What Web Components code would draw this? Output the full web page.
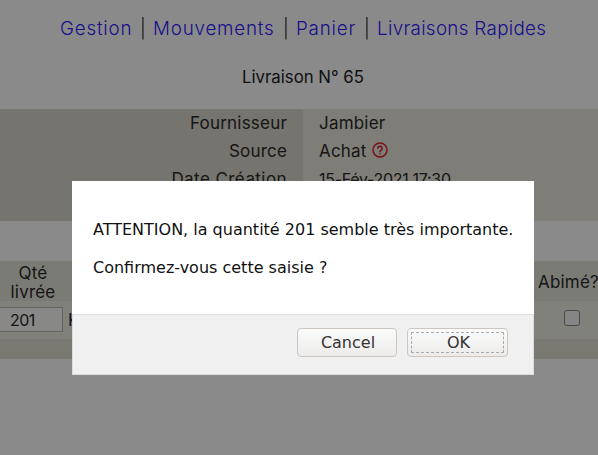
<!DOCTYPE html>
<html lang="fr"><head><meta charset="utf-8"><title>Livraison</title>
<style>
html,body{margin:0;padding:0;height:100%;background:#fff;overflow:hidden}
body{font-family:Inter,"Liberation Sans",sans-serif;color:#333}
</style></head><body>
<app-nav></app-nav>
<page-title>Livraison N° 65</page-title>
<info-table></info-table>
<lines-table></lines-table>
<confirm-dialog>
  <p>ATTENTION, la quantité 201 semble très importante.</p>
  <p>Confirmez-vous cette saisie ?</p>
</confirm-dialog>
<script>
function def(name, html){
  customElements.define(name, class extends HTMLElement{
    constructor(){super();this.attachShadow({mode:'open'}).innerHTML=html;}
  });
}
def('app-nav',`<style>
:host{display:flex;justify-content:center;height:59px;box-sizing:border-box;padding-left:8px;font:350 18.8px/58px Inter,sans-serif;color:#1a1a1a;letter-spacing:.8px}
a{color:#3020ff;text-decoration:none;white-space:nowrap}
a.g{width:71px}a.m{width:121px}a.p{width:59px}
a.long{width:169px;letter-spacing:.33px}
span{width:13px;padding-left:9px;letter-spacing:0;will-change:transform}
</style><a class="g">Gestion</a><span>|</span><a class="m">Mouvements</a><span>|</span><a class="p">Panier</a><span>|</span><a class="long">Livraisons Rapides</a>`);
def('page-title',`<style>
:host{display:block;height:50px;box-sizing:border-box;padding-left:8px;text-align:center;font:16.8px/36px Inter,sans-serif;color:#222}
</style><slot></slot>`);
def('info-table',`<style>
:host{display:grid;grid-template-columns:303px 1fr;grid-auto-rows:28px;font:17px/28px Inter,sans-serif;letter-spacing:.2px;color:#2a2a2a}
.k{background:#d8d6cb;text-align:right;padding-right:16px}
.v{background:#e9e8dc;padding-left:16px;display:flex;align-items:center;gap:5px}
.date{font-size:16px;letter-spacing:-.3px}
.wide{letter-spacing:.43px}
svg{width:16px;height:16px;margin-top:-2px}
</style>
<div class="k">Fournisseur</div><div class="v">Jambier</div>
<div class="k">Source</div><div class="v">Achat <svg viewBox="0 0 16 16" fill="none" stroke="#e0202a" stroke-width="1.5"><circle cx="8" cy="8" r="7"/><path d="M5.9 6.3a2.1 2.1 0 1 1 3.2 1.8c-.7.4-1.1.8-1.1 1.6" stroke-linecap="round"/><path d="M8 11.2v1.3"/></svg></div>
<div class="k wide">Date Création</div><div class="v date">15-Fév-2021 17:30</div>
<div class="k"></div><div class="v"></div>`);
def('lines-table',`<style>
:host{display:block;margin-top:40px;font:17px/20px Inter,sans-serif;letter-spacing:.2px;color:#2a2a2a}
.head{display:flex;justify-content:space-between;align-items:flex-end;height:40px;background:#e4e3d8}
.q{width:66px;text-align:center;line-height:19px;transform:translateY(1px)}
.a{padding:0 0 9px;width:60px;text-align:left}
.row{display:flex;justify-content:space-between;align-items:center;height:38px;background:#eeeee6}
.left{display:flex;align-items:center;gap:5px;margin-top:-1px}
.in{box-sizing:border-box;width:65px;height:25px;margin-left:-2px;border:1px solid #b5b5b5;background:#fbfbf8;padding:1px 0 0 11px;line-height:22px;font-size:16px;letter-spacing:-.5px}
.cb{box-sizing:border-box;width:16px;height:16px;border:1px solid #888;border-radius:3px;background:#f6f6f6;margin:-4px 18px 0 0}
.foot{height:20px;background:#e0dfd3}
</style>
<div class="head"><div class="q">Qté<br>livrée</div><div class="a">Abimé?</div></div>
<div class="row"><div class="left"><div class="in">201</div><span>Kg</span></div><div class="cb"></div></div>
<div class="foot"></div>`);
def('confirm-dialog',`<style>
:host{position:fixed;inset:0;background:rgba(0,0,0,.46);display:block}
.d{position:absolute;left:72px;top:181px;width:462px;height:194px;background:#fff;display:flex;flex-direction:column;font:16px "DejaVu Sans",sans-serif;color:#111}
.b{flex:1;padding:40px 20px 0 21px}
::slotted(p){margin:0 0 20px;line-height:18px;white-space:nowrap}
.f{height:61px;box-sizing:border-box;background:#f0f0f0;border:1px solid #ddd;display:flex;justify-content:flex-end;gap:10px;padding:13px 25px 0 0}
button{box-sizing:border-box;width:100px;height:29px;font:16px "DejaVu Sans",sans-serif;color:#333;background:linear-gradient(#fbfbfb,#ecebea);border:1px solid #cdc6c0;border-radius:4px;padding:0 0 0 2px}
button.ok{width:101px;outline:1px dashed #aaa;outline-offset:-5px}
</style><div class="d"><div class="b"><slot></slot></div><div class="f"><button>Cancel</button><button class="ok">OK</button></div></div>`);
</script>
</body></html>
